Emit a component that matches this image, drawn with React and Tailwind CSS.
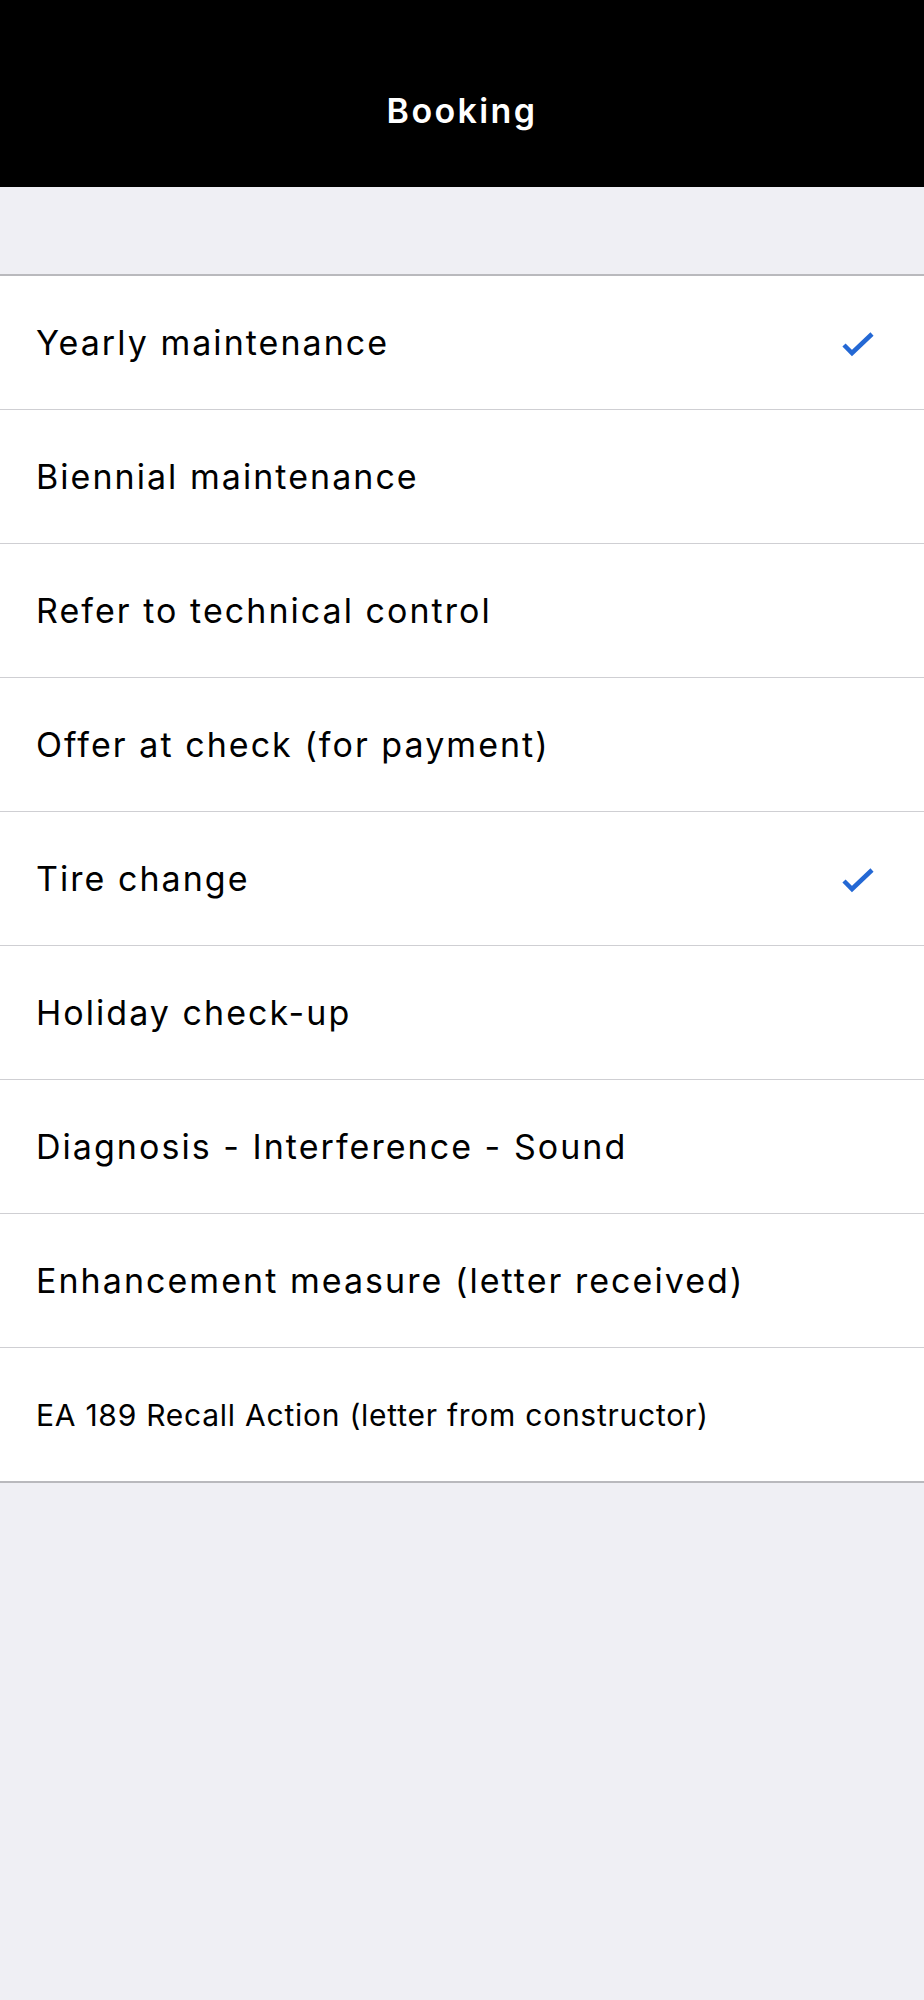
const items = [
  { label: 'Yearly maintenance', checked: true },
  { label: 'Biennial maintenance' },
  { label: 'Refer to technical control' },
  { label: 'Offer at check (for payment)' },
  { label: 'Tire change', checked: true },
  { label: 'Holiday check-up' },
  { label: 'Diagnosis - Interference - Sound' },
  { label: 'Enhancement measure (letter received)' },
  { label: 'EA 189 Recall Action (letter from constructor)', small: true },
];

const Check = () => (
  <svg width="36" height="30" viewBox="0 0 36 30" fill="none">
    <polyline points="4,17 12,25 32,6" stroke="#2468d4" strokeWidth="4.5" strokeLinecap="butt" strokeLinejoin="miter" />
  </svg>
);

export default function App() {
  return (
    <div className="min-h-[2000px] bg-[#efeff4] font-['Inter',sans-serif] text-black">
      {/* Nav bar */}
      <div className="h-[187px] bg-black flex justify-center">
        <div className="mt-[94px] h-[34px] text-[34px] leading-none font-semibold text-white tracking-[0.07em]">
          Booking
        </div>
      </div>

      <div className="h-[87px]"></div>
      <div className="h-[2px] bg-[#b9b9bd]"></div>

      <div className="bg-white">
        {items.map((item, i) => (
          <div key={i}>
            {i > 0 && <div className="h-px bg-[#cfcfd3]"></div>}
            <div className="h-[133px] flex items-center justify-between pl-[36px] pr-[48px]">
              <span
                className={
                  item.small
                    ? 'text-[30px] leading-none tracking-[0.025em]'
                    : 'text-[34px] leading-none tracking-[0.06em]'
                }
              >
                {item.label}
              </span>
              {item.checked && <Check />}
            </div>
          </div>
        ))}
      </div>
      <div className="h-[2px] bg-[#b9b9bd]"></div>
    </div>
  );
}
